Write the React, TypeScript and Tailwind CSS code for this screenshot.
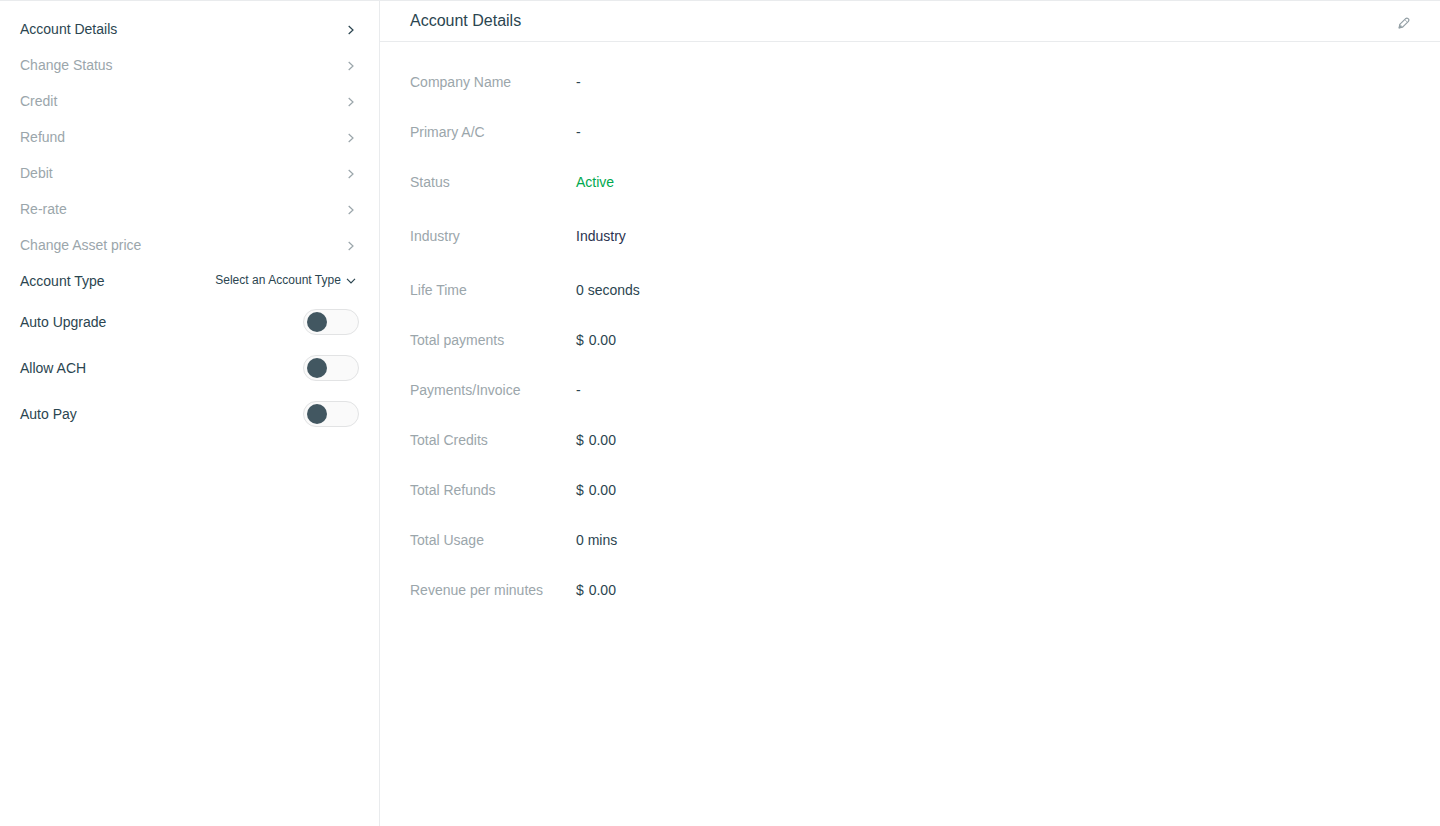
const navItems = ["Account Details", "Change Status", "Credit", "Refund", "Debit", "Re-rate", "Change Asset price"];

const toggles = ["Auto Upgrade", "Allow ACH", "Auto Pay"];

type Field = { label: string; value: string; row: string; color: string };

const fields: Field[] = [
  { label: "Company Name", value: "-", row: "h-[50px]", color: "text-[#2b4550]" },
  { label: "Primary A/C", value: "-", row: "h-[50px]", color: "text-[#2b4550]" },
  { label: "Status", value: "Active", row: "h-[50px]", color: "text-[#00a84f]" },
  { label: "Industry", value: "Industry", row: "h-[58px]", color: "text-[#2b3350]" },
  { label: "Life Time", value: "0 seconds", row: "h-[50px]", color: "text-[#2b4550]" },
  { label: "Total payments", value: "$ 0.00", row: "h-[50px]", color: "text-[#2b4550] [word-spacing:1px]" },
  { label: "Payments/Invoice", value: "-", row: "h-[50px]", color: "text-[#2b4550]" },
  { label: "Total Credits", value: "$ 0.00", row: "h-[50px]", color: "text-[#2b4550] [word-spacing:1px]" },
  { label: "Total Refunds", value: "$ 0.00", row: "h-[50px]", color: "text-[#2b4550] [word-spacing:1px]" },
  { label: "Total Usage", value: "0 mins", row: "h-[50px]", color: "text-[#2b4550]" },
  { label: "Revenue per minutes", value: "$ 0.00", row: "h-[50px]", color: "text-[#2b4550] [word-spacing:1px]" },
];

function ChevronRight() {
  return (
    <svg width="8" height="10" viewBox="0 0 8 10" fill="none" stroke="currentColor" strokeWidth="1.2" className="mt-0.5">
      <path d="M1.7 1 6 5 1.7 9" />
    </svg>
  );
}

function ChevronDown() {
  return (
    <svg width="10" height="8" viewBox="0 0 10 8" fill="none" stroke="currentColor" strokeWidth="1.2" className="mt-px">
      <path d="M1 1.8 5 5.8 9 1.8" />
    </svg>
  );
}

function Pencil() {
  return (
    <svg width="12" height="12" viewBox="0 0 12 12" fill="none" stroke="#939fa5" strokeWidth="1.2" strokeLinejoin="round">
      <path d="M1.2 10.8 1.8 7.4 7.4 1.8Q8.8.7 9.8 1.4L10.6 2.2Q11.3 3.2 10.2 4.6L4.6 10.2Z" />
      <path d="M1.8 7.4 4.6 10.2M7 2.8 9.2 5" strokeWidth=".8" />
      <path d="M1.2 10.8 1.8 8.8 3.2 10.2Z" fill="#939fa5" />
    </svg>
  );
}

function Sidebar() {
  return (
    <aside className="w-[380px] shrink-0 border-r border-[#e9ebed] pt-2.5 pr-5 pl-5">
      <nav>
        {navItems.map((item, i) => (
          <a
            key={item}
            className={`flex h-9 items-center justify-between pr-1 ${i === 0 ? "text-[#2b4550]" : "text-[#9ba6ab]"}`}
          >
            <span>{item}</span>
            <ChevronRight />
          </a>
        ))}
      </nav>
      <div className="flex h-9 items-center justify-between pr-[3px] text-[#2b4550]">
        <span>Account Type</span>
        <button className="mb-0.5 flex items-center gap-[5px] text-xs tracking-[0.03px]">
          Select an Account Type
          <ChevronDown />
        </button>
      </div>
      {toggles.map((label) => (
        <div key={label} className="flex h-[46px] items-center justify-between text-[#2b4550]">
          <span>{label}</span>
          <button className="flex h-[26px] w-14 items-center rounded-full border border-[#e2e3e4] bg-[#fafafa] pl-[3px]">
            <span className="size-5 rounded-full bg-[#425761]" />
          </button>
        </div>
      ))}
    </aside>
  );
}

function Details() {
  return (
    <main className="flex-1">
      <header className="flex h-[41px] items-center justify-between border-b border-[#e9ebed] pr-[30px] pl-[30px]">
        <h1 className="text-base leading-5 text-[#2b4550]">Account Details</h1>
        <button className="mt-1">
          <Pencil />
        </button>
      </header>
      <dl className="pt-[15px] pl-[30px]">
        {fields.map(({ label, value, row, color }) => (
          <div key={label} className={`flex items-center ${row}`}>
            <dt className="w-[166px] text-[#9ba6ab]">{label}</dt>
            <dd className={color}>{value}</dd>
          </div>
        ))}
      </dl>
    </main>
  );
}

export default function App() {
  return (
    <div className="flex h-[826px] w-full overflow-hidden border-t border-[#e9ebed] bg-white font-['Liberation_Sans',Arial,sans-serif] text-sm leading-5">
      <Sidebar />
      <Details />
    </div>
  );
}
